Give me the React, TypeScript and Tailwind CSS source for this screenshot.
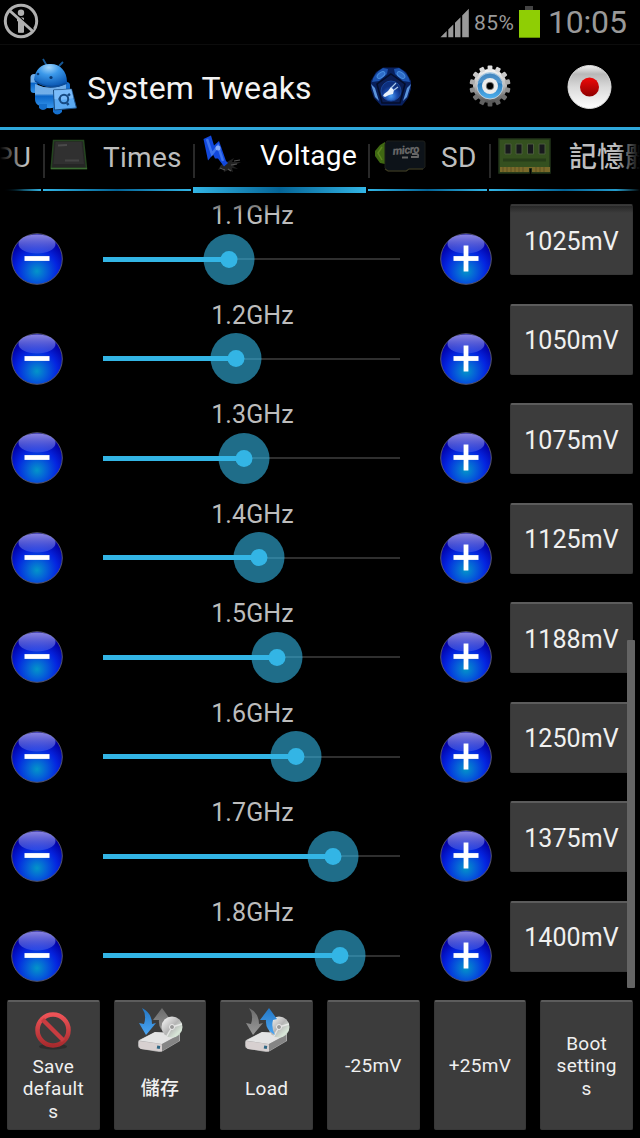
import type { ReactNode } from "react";

const steps = [
  { freq: "1.1GHz", mv: 1025, pos: 125.5 },
  { freq: "1.2GHz", mv: 1050, pos: 133.3 },
  { freq: "1.3GHz", mv: 1075, pos: 140.5 },
  { freq: "1.4GHz", mv: 1125, pos: 155.5 },
  { freq: "1.5GHz", mv: 1188, pos: 174.3 },
  { freq: "1.6GHz", mv: 1250, pos: 193 },
  { freq: "1.7GHz", mv: 1375, pos: 229.5 },
  { freq: "1.8GHz", mv: 1400, pos: 237.3 },
];

const NoInfoIcon = () => (
  <svg width="36" height="36" viewBox="0 0 36 36" fill="none">
    <circle cx="18" cy="18" r="15.7" stroke="#b0b0b0" strokeWidth="3" />
    <circle cx="18" cy="9.8" r="3.2" fill="#b0b0b0" />
    <path d="M14.5 15h6v14.300h-5V18h-1z" fill="#b0b0b0" stroke="#b0b0b0" strokeWidth="1" />
    <path d="M9 7.500l21.500 19" stroke="#000" strokeWidth="1.500" />
    <path d="M6.5 7.500l23 20.500" stroke="#b0b0b0" strokeWidth="3" />
  </svg>
);

const StatusBar = () => (
  <div className="flex h-[45px] items-start border-b border-[#0c0c0c]">
    <div className="ml-[2.5px] mt-[3px]">
      <NoInfoIcon />
    </div>
    <svg className="ml-auto mt-[8px]" width="30" height="30" viewBox="0 0 30 30" fill="#999">
      <path d="M0.5 29.3L6.7 23v6.3zM8.3 21.5l5-5v12.8h-5zM15 14.8l5.5-5.5v20H15zM22.2 7.5L28.8 .7v28.6h-6.6z" />
    </svg>
    <span className="ml-[4px] mt-[9px] w-[42px] whitespace-nowrap text-[21px] leading-7 tracking-[0.4px] text-[#999]">85%</span>
    <svg className="ml-[2px] mt-[6px]" width="22" height="32" viewBox="0 0 22 32">
      <path d="M7 0h8v4H7z" fill="#444" />
      <path d="M1 4h21v27.7H1z" fill="#8fce04" />
    </svg>
    <span className="ml-[8px] mt-[3px] w-[92px] whitespace-nowrap text-[32px] leading-[38px] tracking-[-0.2px] text-[#999]">10:05</span>
  </div>
);

const DroidIcon = () => (
  <svg width="50" height="60" viewBox="0 0 50 60">
    <defs>
      <radialGradient id="droid" cx=".45" cy=".15" r=".8">
        <stop stopColor="#a4d6fb" />
        <stop offset=".4" stopColor="#3c99ea" />
        <stop offset="1" stopColor="#0a58b4" />
      </radialGradient>
      <linearGradient id="body" x2="0" y2="1">
        <stop stopColor="#6fadea" />
        <stop offset=".4" stopColor="#72afe9" />
        <stop offset=".5" stopColor="#0b66c8" />
        <stop offset="1" stopColor="#3696ec" />
      </linearGradient>
    </defs>
    <path d="M14 2l4 7M34 5l-4 4" stroke="#165896" strokeWidth="1.8" />
    <rect x="1.5" y="17" width="7" height="19" rx="3.5" fill="url(#body)" />
    <rect x="34" y="25" width="7" height="12" rx="3.5" fill="#176fcf" />
    <path d="M6 27q15 7 31 0v19q-2 4-8 4-12 3-20-2-3-2-3-6z" fill="url(#body)" />
    <path d="M10 47h8v4q-4 4-8 0zM24 50h9v5q-5 5-9 0z" fill="#1670cd" />
    <path d="M5 23C6 11 14 6 22 7c9 0 16 7 16 18-8 8-25 7-33-2z" fill="url(#droid)" />
    <path d="M6 24q15 10 32 2" stroke="#0b4d9b" strokeWidth="1.5" fill="none" />
    <circle cx="9" cy="17" r="1.3" fill="#0a3870" />
    <circle cx="22" cy="20.5" r="1.6" fill="#0a3870" />
    <path d="M24.5 33l18-1 5 19-22 2z" fill="#5aa9f2" stroke="#194d83" strokeWidth="1" />
    <path d="M35 32.5l7.5-.5 2 9q-10 3-19 1l-.5-9z" fill="#8ec8ff" opacity=".6" />
    <circle cx="35" cy="42" r="4.2" fill="none" stroke="#164a83" strokeWidth="2" />
    <path d="M39 38.500l2-1.500M29.500 42h2M38 46l1.500 2" stroke="#164a83" strokeWidth="2.500" />
  </svg>
);

const PentaIcon = () => (
  <svg width="42" height="42" viewBox="0 0 42 42">
    <defs>
      <radialGradient id="penta" cy=".75">
        <stop stopColor="#4a9cf2" />
        <stop offset=".6" stopColor="#1a4db0" />
        <stop offset="1" stopColor="#0d2f7e" />
      </radialGradient>
    </defs>
    <path d="M13 1.500h16l7 4.500 5 9v8l-3 9-6 7.500H11L4 32 .8 23v-8L6 6z" fill="#081f5c" />
    <path d="M13 2l5 1-1 5-8 7-7 1q2-9 11-14zM29 2l-5 1 1 5 8 7 7 1q-2-9-11-14z" fill="#1b52ae" />
    <path d="M1 18l4 4 4 13-4-4zM41 18l-4 4-4 13 4-4z" fill="#5b94dc" />
    <ellipse cx="11" cy="9" rx="4.500" ry="2.500" transform="rotate(-38 11 9)" fill="#2f6dc8" stroke="#4a90e0" strokeWidth="1" />
    <ellipse cx="31" cy="9" rx="4.500" ry="2.500" transform="rotate(38 31 9)" fill="#2f6dc8" stroke="#4a90e0" strokeWidth="1" />
    <path d="M21 8l14 10-5 19H12L7 18z" fill="#0b1d52" stroke="#040d28" strokeWidth="1.500" />
    <circle cx="21" cy="25" r="10" fill="url(#penta)" stroke="#1b4ea6" strokeWidth=".8" />
    <path d="M14 28l4-3 3-4 3 3-1 4-4 1-4 2-2-1z" fill="#e8f1fb" />
    <path d="M21 22l5-5M24 24l4-3" stroke="#a9c7e8" strokeWidth="1.200" />
  </svg>
);

const GearIcon = () => (
  <svg width="42" height="42" viewBox="0 0 42 42">
    <defs>
      <linearGradient id="gear" x2="0" y2="1">
        <stop stopColor="#fafafa" />
        <stop offset=".5" stopColor="#b9b9b9" />
        <stop offset="1" stopColor="#4d4d4d" />
      </linearGradient>
      <linearGradient id="ring" x2="0" y2="1">
        <stop stopColor="#155a9c" />
        <stop offset="1" stopColor="#4fb2f0" />
      </linearGradient>
    </defs>
    <circle cx="21" cy="21" r="17" fill="url(#gear)" />
    {Array.from({ length: 14 }, (_, i) => {
      const a = (i * Math.PI) / 7;
      const y = 21 - Math.cos(a) * 18.3;
      const c = Math.round(235 - (y / 42) * 155);
      return (
        <rect
          key={i}
          x="18.6"
          y="0.500"
          width="4.800"
          height="5"
          rx="1"
          fill={`rgb(${c},${c},${c})`}
          transform={`rotate(${(i * 360) / 14} 21 21)`}
        />
      );
    })}
    <circle cx="21" cy="21" r="13" fill="url(#ring)" stroke="#c3ced8" strokeWidth="1" />
    <path d="M9 19a12 12 0 0 1 24 0q-12-6-24 0z" fill="#7dbbe9" opacity=".45" />
    <circle cx="21" cy="21" r="8" fill="#ececec" />
    <circle cx="21" cy="21" r="3.800" fill="#000" stroke="#888" strokeWidth=".8" />
  </svg>
);

const RecordIcon = () => (
  <svg width="46" height="46" viewBox="0 0 46 46">
    <defs>
      <linearGradient id="rec" x2="0" y2="1">
        <stop stopColor="#f2f2f2" />
        <stop offset=".2" stopColor="#b8b8b8" />
        <stop offset=".5" stopColor="#dadada" />
        <stop offset="1" stopColor="#fff" />
      </linearGradient>
      <linearGradient id="dot" x2="0" y2="1">
        <stop stopColor="#f00808" />
        <stop offset="1" stopColor="#8e0000" />
      </linearGradient>
    </defs>
    <circle cx="22.500" cy="23" r="21.500" fill="url(#rec)" stroke="#ddd" strokeWidth="1" />
    <circle cx="22.500" cy="23" r="9.500" fill="url(#dot)" />
  </svg>
);

const Header = () => (
  <header className="flex h-[85px] items-start border-b-[3px] border-[#2fa8dc] pl-[29px]">
    <div className="mt-[12px]">
      <DroidIcon />
    </div>
    <h1 className="ml-[8px] mt-[24px] w-[283px] whitespace-nowrap text-[32px] leading-[38px] tracking-[0.15px] text-[#f3f3f3]">System Tweaks</h1>
    <div className="mt-[21px]">
      <PentaIcon />
    </div>
    <div className="ml-[57px] mt-[20px]">
      <GearIcon />
    </div>
    <div className="ml-[56px] mt-[19px]">
      <RecordIcon />
    </div>
  </header>
);

const ChipIcon = () => (
  <svg width="38" height="32" viewBox="0 0 38 32">
    <path d="M3.500 1.500h30L36.500 29.500H1.200z" fill="#262626" stroke="#24451f" strokeWidth="1.500" />
    <path d="M5.500 3h26l2.500 22H3.500z" fill="#303030" />
    <path d="M1 29.500h36" stroke="#3c6c33" strokeWidth="1.500" />
    <path d="M8 6.500l9-.5" stroke="#4a4a4a" strokeWidth="2" />
    <path d="M15 21.500h14" stroke="#444" strokeWidth="2" />
  </svg>
);

const BoltIcon = () => (
  <svg width="42" height="40" viewBox="0 0 42 40">
    <path d="M18 30l-3 5 5-2 1 4 4-2 5 2-1-4 6 1-5-3 8-4h-9l2-4-7 4z" fill="#222" />
    <path d="M17 33l5 2M28 30l6-1M25 34l3 2M31 26l6-1" stroke="#555" strokeWidth="1.200" />
    <path d="M.5 4L8 .5l3 10L16 6l7 20 2 2-4 3.500-6-8-3 0-2-4-5 6z" fill="#1248dc" />
    <path d="M4 4l5 15 6-8 5 15" stroke="#3d74ee" strokeWidth="2.500" fill="none" />
    <circle cx="15" cy="13" r="2.500" fill="#a9c4fb" opacity=".7" />
  </svg>
);

const SdIcon = () => (
  <svg width="54" height="36" viewBox="0 0 54 36">
    <path d="M11 3v22L6 24l-5-7v-5l5-6z" fill="#3f6812" />
    <path d="M8 8l-4 6 4 7" stroke="#5c8520" strokeWidth="1.500" fill="none" />
    <path d="M13 2h36q2 0 2 2v24l-2 2H35l-2 2H14l-3-3V5z" fill="#0d1319" stroke="#1d1f1a" strokeWidth="1" />
    <path d="M11 30l3 2h18l3-2h14" stroke="#3c3a20" strokeWidth="1.200" fill="none" />
    <text x="19" y="16" fontFamily="Roboto, sans-serif" fontSize="11.500" fontWeight="900" fontStyle="italic" fill="#666" textLength="27" transform="rotate(-5 19 17)">
      micro
    </text>
    <path d="M28 18.500h6M37 18h7q1-3-2-3h-4" stroke="#666" strokeWidth="1.800" fill="none" />
  </svg>
);

const RamIcon = () => (
  <svg width="54" height="36" viewBox="0 0 54 36">
    <path d="M1 1h51v34H34v-5h-3v5H1z" fill="#34501f" stroke="#22341a" strokeWidth="1.500" />
    <path d="M2 29h50v5H34v-4h-3v4H2z" fill="#7a6a2a" />
    <path d="M5 29v5M9 29v5M13 29v5M17 29v5M21 29v5M25 29v5M38 29v5M42 29v5M46 29v5" stroke="#5e5122" strokeWidth="1" />
    <path d="M7 6h6v10H7zM18 6h6v10h-6zM29.500 6h6v10h-6zM41 6h6v10h-6z" fill="#17191c" stroke="#4a5a3c" strokeWidth="1" />
    <path d="M5 22h43" stroke="#263d19" strokeWidth="3" />
  </svg>
);

const Divider = () => <div className="mt-[14px] h-[34px] w-[2px] shrink-0 bg-[#292929]" />;

const underline = "bg-[linear-gradient(90deg,#33b5e5,#046496_50%,#33b5e5)]";

const Tabs = () => (
  <nav className="relative flex h-[63px] w-[640px] shrink-0 gap-[2px] overflow-hidden text-[28px] leading-8 text-[#bdbdbd]">
    <div className="flex w-[41px] shrink-0 flex-col justify-between pb-[2px]">
      <span className="-ml-[5px] mt-[12px]">PU</span>
      <div className="h-[2px] bg-linear-to-r from-black to-[#33b5e5]" />
    </div>
    <div className="flex w-[148px] shrink-0 flex-col justify-between pb-[2px]">
      <div className="flex items-start">
        <Divider />
        <div className="ml-[5px] mt-[9px]"><ChipIcon /></div>
        <span className="ml-[15px] mt-[12px] tracking-[0.3px]">Times</span>
      </div>
      <div className={`h-[2px] ${underline}`} />
    </div>
    <div className="flex w-[173px] shrink-0 flex-col justify-between">
      <div className="flex h-[56px] items-start">
        <Divider />
        <div className="ml-[8px] mt-[5px]"><BoltIcon /></div>
        <span className="ml-[15px] mt-[10px] tracking-[0.3px] text-white">Voltage</span>
      </div>
      <div className={`h-[6px] ${underline}`} />
    </div>
    <div className="flex w-[119px] shrink-0 flex-col justify-between pb-[2px]">
      <div className="flex items-start">
        <Divider />
        <div className="ml-[4px] mt-[9px]"><SdIcon /></div>
        <span className="ml-[13px] mt-[12px] tracking-[0.3px]">SD</span>
      </div>
      <div className={`h-[2px] ${underline}`} />
    </div>
    <div className="flex w-[151px] shrink-0 flex-col justify-between pb-[2px]">
      <div className="flex items-start">
        <Divider />
        <div className="ml-[7px] mt-[8px]"><RamIcon /></div>
        <span className="ml-[17px] mt-[12px] whitespace-nowrap font-medium">記憶體</span>
      </div>
      <div className={`h-[2px] ${underline}`} />
    </div>
    {/* Fading edges */}
    <div className="absolute left-0 top-0 h-full w-[24px] bg-linear-to-r from-black to-transparent"></div>
    <div className="absolute right-0 top-0 h-full w-[24px] bg-linear-to-l from-black to-transparent"></div>
  </nav>
);

const RoundButton = ({ plus }: { plus?: boolean }) => (
  <svg width="54" height="54" viewBox="0 0 54 54">
    <defs>
      <radialGradient id="ball" cx=".5" cy=".74" r=".62">
        <stop stopColor="#0396c8" />
        <stop offset=".3" stopColor="#0560d8" />
        <stop offset=".65" stopColor="#0424e0" />
        <stop offset="1" stopColor="#0202a8" />
      </radialGradient>
      <linearGradient id="gloss" x2="0" y2="1">
        <stop stopColor="#8a84e0" />
        <stop offset="1" stopColor="#5a70ea" stopOpacity=".4" />
      </linearGradient>
    </defs>
    <circle cx="27" cy="27" r="25.300" fill="url(#ball)" stroke="#54546c" strokeWidth="1" />
    <ellipse cx="27" cy="12" rx="18.500" ry="9.500" fill="url(#gloss)" />
    <path d="M14.500 26.500h25" stroke="#fff" strokeWidth="4.800" />
    {plus && <path d="M27 13.500v26" stroke="#fff" strokeWidth="4.800" />}
  </svg>
);

const StepRow = ({ freq, mv, pos }: { freq: string; mv: number; pos: number }) => (
  <div className="flex h-[99.500px] shrink-0 items-start">
    <div className="ml-[10px] mt-[39px]">
      <RoundButton />
    </div>
    <div className="ml-[39px] w-[297px]">
      <p className="mt-[8px] pl-[2px] text-center text-[25px] leading-[30px] tracking-[0.1px] text-[#bcbcbc]">{freq}</p>
      <div className="relative mt-[2.500px] flex h-[51px] items-center">
        <div className="h-[2px] w-full bg-[#2f2f2f]" />
        <div className="absolute left-0 h-[5px] bg-[#33b5e5]" style={{ width: pos }} />
        <div
          className="absolute flex size-[51px] -translate-x-1/2 items-center justify-center rounded-full bg-[#33b5e5]/60"
          style={{ left: pos }}
        >
          <div className="size-[17px] rounded-full bg-[#33b5e5]" />
        </div>
      </div>
    </div>
    <div className="ml-[39px] mt-[39px]">
      <RoundButton plus />
    </div>
    <button className="ml-[17px] mt-[11px] h-[71px] w-[123px] rounded-[2px] border border-t-2 border-[#373737] border-t-[#5c5c5c] bg-[#3c3c3c] pt-[3px] text-[25px] tracking-[0.1px] text-[#f0f0f0]">
      {mv}mV
    </button>
  </div>
);

const BanIcon = () => (
  <svg width="46" height="46" viewBox="0 0 46 46" fill="none">
    <defs>
      <linearGradient id="ban" x2="0" y2="1">
        <stop stopColor="#ee5357" />
        <stop offset="1" stopColor="#a82b2e" />
      </linearGradient>
    </defs>
    <ellipse cx="23" cy="39.500" rx="14" ry="3" fill="#2d2d2d" />
    <circle cx="23" cy="23" r="15.500" stroke="url(#ban)" strokeWidth="4.500" />
    <path d="M12.500 12.500l21 21" stroke="#c83c40" strokeWidth="4.500" />
  </svg>
);

const DriveIcon = ({ load }: { load?: boolean }) => {
  const up = <path d="M25 1l8 11-4 1q-2 8 2 15-10-5-9-15l-6 0z" fill={load ? "url(#blue)" : "url(#grey)"} />;
  return (
    <svg width="46" height="46" viewBox="0 0 46 46">
      <defs>
        <linearGradient id="blue" x2="0" y2="1">
          <stop stopColor="#2477c4" />
          <stop offset="1" stopColor="#4ba6f4" />
        </linearGradient>
        <linearGradient id="grey" x2="0" y2="1">
          <stop stopColor="#6b6b6b" />
          <stop offset="1" stopColor="#9a9a9a" />
        </linearGradient>
        <linearGradient id="disc" x2="1" y2="1">
          <stop stopColor="#fff" />
          <stop offset=".5" stopColor="#b5b5b5" />
          <stop offset=".8" stopColor="#d9e8d9" />
          <stop offset="1" stopColor="#888" />
        </linearGradient>
      </defs>
      <path d="M1 35q0-2 3-3l14-7 25 1v8L26 44q-2 1-4 1L4 42q-3-1-3-3z" fill="#a9a9a9" />
      <path d="M2 33.500l16-8.500 25 2-18 10z" fill="#e4e4e4" />
      <path d="M2 34l22 3q1 0 1 2v5.500L4 42q-2-1-2-3z" fill="#d7d0d0" />
      <path d="M25 37l17-9v6L25 44z" fill="#858585" />
      <path d="M20 40l3 .5" stroke="#2e6684" strokeWidth="3" />
      {!load && up}
      <circle cx="35" cy="20" r="10.500" fill="url(#disc)" />
      <path d="M35 20l10-3M35 20l-5 9" stroke="#fff" strokeWidth="1.500" opacity=".6" />
      <circle cx="35" cy="20" r="2.500" fill="#999" stroke="#eee" strokeWidth="1" />
      {load && up}
      <path d="M5 1q10 5 10 16l4-1-10 12-7-12 5 1Q10 8 5 1z" fill={load ? "url(#grey)" : "url(#blue)"} />
    </svg>
  );
};

const ActionButton = ({ icon, children }: { icon?: ReactNode; children: ReactNode }) => (
  <button className="flex h-[130px] flex-col items-center rounded-[2px] border border-t-2 border-[#373737] border-t-[#5c5c5c] bg-[#3c3c3c] px-[13px] pb-[3px] pt-[5px] text-[19px] leading-[22.300px] tracking-[0.3px] text-[#f0f0f0]">
    {icon}
    <span className="flex flex-1 flex-col items-center justify-center whitespace-pre">{children}</span>
  </button>
);

export default function App() {
  return (
    <div className="flex h-[1138px] w-[640px] flex-col overflow-hidden bg-black font-['Roboto','Noto_Sans_CJK_TC',sans-serif]">
      <StatusBar />
      <Header />
      <Tabs />

      <main className="relative flex h-[800px] flex-col overflow-hidden">
        {steps.map((s) => (
          <StepRow key={s.freq} {...s} />
        ))}
        {/* Top fading edge and scrollbar */}
        <div className="absolute inset-x-0 top-0 h-[20px] bg-linear-to-b from-black to-transparent"></div>
        <div className="absolute right-[5px] top-[447px] h-[348px] w-[8px] rounded-[1px] bg-[#646464]"></div>
      </main>

      <footer className="grid grid-cols-6 gap-[14px] px-[7px] pt-[7px]">
        <ActionButton icon={<BanIcon />}>{"Save\ndefault\ns"}</ActionButton>
        <ActionButton icon={<DriveIcon />}>
          <b className="font-medium">儲存</b>
        </ActionButton>
        <ActionButton icon={<DriveIcon load />}>Load</ActionButton>
        <ActionButton>-25mV</ActionButton>
        <ActionButton>+25mV</ActionButton>
        <ActionButton>{"Boot\nsetting\ns"}</ActionButton>
      </footer>
    </div>
  );
}
